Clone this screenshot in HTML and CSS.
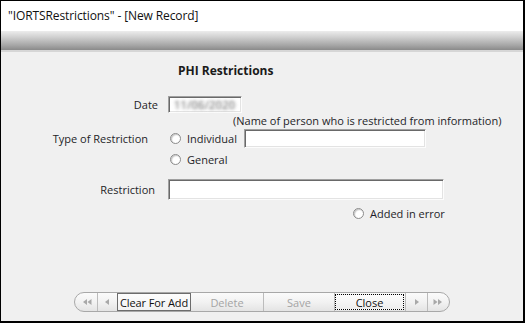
FILE: index.html
```html
<!DOCTYPE html>
<html>
<head>
<meta charset="utf-8">
<link rel="stylesheet" href="styles.css">
</head>
<body>
<div class="window">
  <div class="titlebar">"IORTSRestrictions" - [New Record]</div>
  <div class="band"></div>
  <div class="content">
    <div class="heading">PHI Restrictions</div>
    <div class="row row-date">
      <div class="label">Date</div>
      <div class="field date"><span class="blur">11/06/2020</span></div>
    </div>
    <div class="note">(Name of person who is restricted from information)</div>
    <div class="row row-type">
      <div class="label">Type of Restriction</div>
      <span class="radio"></span><span class="rtext">Individual</span>
      <div class="field person"></div>
    </div>
    <div class="row row-general">
      <div class="label"></div>
      <span class="radio"></span><span class="rtext">General</span>
    </div>
    <div class="row row-restr">
      <div class="label">Restriction</div>
      <div class="field restr"></div>
    </div>
    <div class="row row-added">
      <span class="radio"></span><span class="rtext">Added in error</span>
    </div>
    <div class="navwrap">
      <div class="nav">
        <div class="seg s-first"><svg width="9" height="6" viewBox="0 0 9 6"><path d="M4 0L0 3L4 6Z M8.5 0L4.5 3L8.5 6Z" fill="#a8a8a8"/></svg></div>
        <div class="seg s-prev"><svg width="5" height="6" viewBox="0 0 5 6"><path d="M4 0L0 3L4 6Z" fill="#a8a8a8"/></svg></div>
        <div class="seg s-btn s-clear">Clear For Add</div>
        <div class="seg s-btn s-dis">Delete</div>
        <div class="seg s-btn s-dis s-save">Save</div>
        <div class="seg s-btn s-close"><span class="focus">Close</span></div>
        <div class="seg s-next"><svg width="5" height="6" viewBox="0 0 5 6"><path d="M1 0L5 3L1 6Z" fill="#a8a8a8"/></svg></div>
        <div class="seg s-last"><svg width="9" height="6" viewBox="0 0 9 6"><path d="M0.5 0L4.5 3L0.5 6Z M5 0L9 3L5 6Z" fill="#a8a8a8"/></svg></div>
      </div>
    </div>
  </div>
</div>
</body>
</html>
```

FILE: styles.css
```css
html, body {
  margin: 0;
  padding: 0;
  width: 525px;
  height: 323px;
  overflow: hidden;
  background: #000;
}
.window {
  box-sizing: border-box;
  width: 525px;
  height: 323px;
  border-top: 1px solid #000;
  border-left: 1px solid #000;
  border-right: 2px solid #000;
  border-bottom: 2px solid #000;
  display: flex;
  flex-direction: column;
  font-family: "Open Sans", "Noto Sans", sans-serif;
  font-size: 11px;
  color: #1e1e28;
}
.titlebar {
  height: 30px;
  background: #fff;
  padding-left: 7px;
  line-height: 29px;
  font-size: 12px;
  color: #111;
  letter-spacing: -0.1px;
}
.band {
  height: 19px;
  background: linear-gradient(#ececec, #d2d2d2 30%, #a6a6a6 75%, #8a8a8a);
  border-bottom: 2px solid #d6d6d6;
}
.content {
  flex: 1;
  background: #f0f0f0;
  display: flex;
  flex-direction: column;
}
.heading {
  margin-top: 11px;
  padding-left: 177px;
  font-weight: bold;
  font-size: 12px;
  line-height: 16px;
  color: #1a1a1a;
}
.row {
  display: flex;
  align-items: center;
  white-space: nowrap;
}
.label {
  width: 156px;
  text-align: right;
  flex: none;
}
.field {
  box-sizing: border-box;
  background: #fff;
  border: 1px solid;
  border-color: #a0a0a0 #fcfcfc #fcfcfc #a0a0a0;
  box-shadow: inset 1px 1px 0 #696969, inset -1px -1px 0 #e3e3e3;
}
.row-date {
  margin-top: 17px;
  height: 17px;
}
.row-date .label {
  width: 157px;
}
.date {
  margin-left: 10px;
  width: 74px;
  height: 17px;
  padding: 1px 0 0 5px;
  line-height: 13px;
}
.blur {
  color: transparent;
  text-shadow: 0 0 3px #8c8c8c, 0 0 4px #a8a8a8;
  font-size: 11px;
  letter-spacing: 0.3px;
}
.note {
  margin-top: 1px;
  padding-left: 232px;
  line-height: 14px;
  white-space: nowrap;
}
.row-type {
  margin-top: 1px;
  height: 19px;
}
.row-type .label {
  width: 147px;
}
.radio {
  box-sizing: border-box;
  width: 11px;
  height: 11px;
  border-radius: 50%;
  border: 1px solid #8c8c8c;
  background: radial-gradient(circle at 60% 60%, #fff 40%, #e6e6e6);
  box-shadow: inset 1px 1px 1px #c8c8c8;
  flex: none;
}
.row-type .radio {
  margin-left: 22px;
}
.row-general .label {
  width: 147px;
}
.row-general .radio {
  margin-left: 22px;
}
.rtext {
  margin-left: 6px;
}
.person {
  margin-left: 7px;
  width: 182px;
  height: 19px;
}
.row-general {
  margin-top: 4px;
  height: 14px;
}
.row-restr {
  margin-top: 13px;
  height: 21px;
}
.row-restr .label {
  width: 154px;
}
.restr {
  margin-left: 13px;
  width: 276px;
  height: 21px;
}
.row-added {
  margin-top: 6px;
  height: 14px;
  padding-left: 352px;
}
.navwrap {
  margin-top: auto;
  margin-bottom: 9px;
  padding-left: 73px;
}
.nav {
  display: flex;
  width: 376px;
  height: 20px;
  box-sizing: border-box;
  border: 1px solid #a8a8a8;
  border-radius: 10px;
  background: linear-gradient(#fbfbfb, #f2f2f2 50%, #e4e4e4);
  overflow: hidden;
  white-space: nowrap;
}
.seg {
  box-sizing: border-box;
  height: 100%;
  display: flex;
  align-items: center;
  justify-content: center;
  border-right: 1px solid #bcbcbc;
  flex: none;
}
.s-first { width: 23px; padding-left: 3px; }
.s-prev { width: 20px; }
.s-btn { width: 73px; }
.s-save, .s-close { width: 71px; }
.s-next { width: 22px; }
.s-last { width: 22px; border-right: none; padding-right: 4px; }
.s-clear {
  border: 1px solid #6c6c6c;
  background: linear-gradient(#fdfdfd, #f2f2f2);
  color: #111;
  margin-left: -1px;
  width: 74px;
  letter-spacing: -0.1px;
}
.s-dis {
  color: #a4a4a4;
}
.s-close {
  padding: 1px 1px 1px 0;
  color: #111;
}
.focus {
  box-sizing: border-box;
  width: 100%;
  height: 100%;
  border: 1px dotted #000;
  display: flex;
  align-items: center;
  justify-content: center;
  background: linear-gradient(#fcfcfc, #eeeeee);
}
```
